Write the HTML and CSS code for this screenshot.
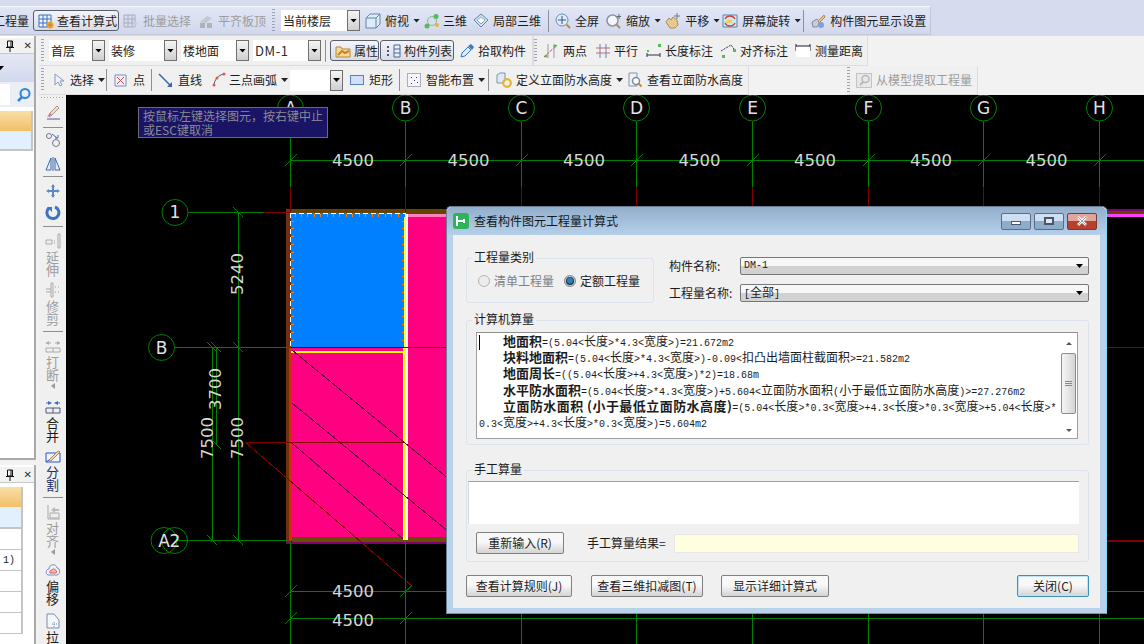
FILE: index.html
```html
<!DOCTYPE html>
<html lang="zh-CN">
<head>
<meta charset="utf-8">
<title>查看构件图元工程量计算式</title>
<link rel="stylesheet" href="styles.css">
</head>
<body>
<div class="app">
  <div class="topband"></div>
  <div class="bar bar1">
    <span class="txt clip">工程量</span>
    <div class="btn on w86 m4"><svg class="ic" viewBox="0 0 16 16"><path d="M1 2h12v12H1z" fill="#eef4ff" stroke="#3b6fc0"/><path d="M1 6h12M1 10h12M5 2v12M9 2v12" stroke="#3b6fc0"/><circle cx="12" cy="12" r="3.5" fill="#f5a623"/><path d="M12 9.5v5M9.5 12h5" stroke="#a85"/></svg><span>查看计算式</span></div>
    <div class="t off m4"><svg class="ic" viewBox="0 0 16 16"><path d="M1 2h11v12H1zM1 6h11M1 10h11M5 2v12M9 2v12" fill="none" stroke="#aab"/><path d="M10 7l5 4-3 1-1 3z" fill="#ccd"/></svg><span>批量选择</span></div>
    <div class="t off m7"><svg class="ic" viewBox="0 0 16 16"><path d="M2 9l7-6 5 2-7 6z" fill="#c4c8d0"/><path d="M2 10h5v5H2zM9 10h5v5H9z" fill="#aeb2ba"/></svg><span>平齐板顶</span></div>
    <i class="grip m6"></i>
    <div class="combo w79 m6"><span class="val">当前楼层</span><b class="drop"></b></div>
    <div class="t m5"><svg class="ic" viewBox="0 0 16 16"><path d="M1 5l4-4h10v10l-4 4H1z" fill="#dcecfb" stroke="#5f86a8"/><path d="M1 5h10v10M11 5l4-4" fill="none" stroke="#5f86a8"/></svg><span>俯视</span><i class="caret"></i></div>
    <div class="t g3 m4"><svg class="ic" viewBox="0 0 16 16"><circle cx="8" cy="8" r="4.5" fill="#d9dfe6" stroke="#8b9"/><circle cx="12" cy="3.5" r="2.5" fill="#5cb85c"/><circle cx="3" cy="13" r="2.5" fill="#5cb85c"/><circle cx="13" cy="12" r="2" fill="#e8b23a"/></svg><span>三维</span></div>
    <div class="t m6"><svg class="ic" viewBox="0 0 16 16"><path d="M8 1l7 6-7 7-7-7z" fill="#cfe2f5" stroke="#5f86a8"/><path d="M4 7l4-3 4 3-4 4z" fill="#fff" stroke="#8ab"/></svg><span>局部三维</span></div>
    <i class="sep m7"></i>
    <div class="t m6"><svg class="ic" viewBox="0 0 16 16"><circle cx="7" cy="7" r="6" fill="#dfe9f8" stroke="#6d8db5"/><path d="M7 3v8M3 7h8" stroke="#35598a"/><path d="M11.500 11.500l3.500 3.500" stroke="#c08a3a" stroke-width="2"/></svg><span>全屏</span></div>
    <div class="t m7"><svg class="ic" viewBox="0 0 16 16"><circle cx="6.500" cy="7.500" r="5.500" fill="#f3f6fb" stroke="#8a94a5" stroke-width="1.500"/><path d="M10.500 11.500l3.500 3.500" stroke="#c08a3a" stroke-width="2"/><path d="M13 1v5M11 3.500h4" stroke="#667"/></svg><span>缩放</span><i class="caret"></i></div>
    <div class="t m4"><svg class="ic" viewBox="0 0 16 16"><path d="M1 9l3-4 2 2 2-3 4 3 1 5-3 3H5z" fill="#e5c98f" stroke="#ad8c55"/><path d="M12 0v6M9 3h6" stroke="#778"/></svg><span>平移</span><i class="caret"></i></div>
    <div class="t m2"><svg class="ic" viewBox="0 0 16 16"><path d="M1 2h14v12H1z" fill="#cdeaf2" stroke="#58a"/><path d="M3 9c2-3 5-3 7-2v3H3z" fill="#e8d063"/><path d="M3 6c2-4 8-4 10 0M13 10c-2 4-8 4-10 0" fill="none" stroke="#d8433a" stroke-width="1.500"/></svg><span>屏幕旋转</span><i class="caret"></i></div>
    <i class="sep m2"></i>
    <div class="t m6"><svg class="ic" viewBox="0 0 16 16"><path d="M2 9l5-3 3 3-3 5H3z" fill="#c9ccd6" stroke="#889"/><path d="M8 8l6-6 1 2-6 6z" fill="#e9c870" stroke="#a86"/><circle cx="11" cy="12" r="3" fill="#7aa3d8"/></svg><span>构件图元显示设置</span></div>
  </div>

  <div class="main">
    <aside class="side">
      <section class="panel panel-a">
        <header class="phead"><svg class="pin" viewBox="0 0 10 12"><path d="M2.500 1h5v6h-5zM6 1v6M1 7.500h8M5 8v4" fill="none" stroke="#111"/></svg><span class="cls">✕</span></header>
        <div class="pbar"><i class="caret dark"></i></div>
        <div class="psearch"><span class="pinput"></span><svg class="sic" viewBox="0 0 14 14"><circle cx="8" cy="5.500" r="4.500" fill="none" stroke="#2f86d6" stroke-width="2"/><path d="M5 9l-4 4" stroke="#2f86d6" stroke-width="2.500"/></svg></div>
        <div class="ptable"><div class="th"></div><div class="sel"></div></div>
      </section>
      <section class="panel panel-b">
        <header class="phead"><svg class="pin" viewBox="0 0 10 12"><path d="M2.500 1h5v6h-5zM6 1v6M1 7.500h8M5 8v4" fill="none" stroke="#111"/></svg><span class="cls">✕</span></header>
        <div class="ptable narrow">
          <div class="th"></div><div class="sel tall"></div>
          <div class="row"></div><div class="row"><span class="rowtxt">1)</span></div><div class="row"></div><div class="row"></div><div class="row"></div>
        </div>
      </section>
    </aside>

    <div class="work">
      <div class="bar bar2">
        <div class="tb tb2a">
          <i class="grip"></i>
          <div class="combo w56 m5"><span class="val">首层</span><b class="drop"></b></div>
          <div class="combo w68 m4"><span class="val">装修</span><b class="drop"></b></div>
          <div class="combo w68 m4"><span class="val">楼地面</span><b class="drop"></b></div>
          <div class="combo w68 m4"><span class="val latin">DM-1</span><b class="drop"></b></div>
          <i class="sep m4"></i>
          <div class="btn on w49 m4"><svg class="ic" viewBox="0 0 16 16"><path d="M1 4h5l1 2h8v8H1z" fill="#f3dc93" stroke="#b08a3a"/><path d="M3 12l4-4 3 2 4-2" fill="none" stroke="#d87a20" stroke-width="2"/></svg><span>属性</span></div>
          <div class="btn on w74 m1"><svg class="ic" viewBox="0 0 16 16"><path d="M2 3h2v2H2zM2 7h2v2H2zM2 11h2v2H2z" fill="#557"/><path d="M9 2h6v12H9zM9 6h6M9 10h6" fill="#e7effa" stroke="#456a9a"/></svg><span>构件列表</span></div>
          <div class="t g3 m5"><svg class="ic" viewBox="0 0 16 16"><path d="M2 14l1-4 6-6 3 3-6 6z" fill="#dcebfb" stroke="#3d78c0"/><path d="M9 3l3-2 3 3-2 3z" fill="#3d78c0"/></svg><span>拾取构件</span></div>
        </div>
        <div class="tb tb2b">
          <i class="grip"></i>
          <div class="t m6"><svg class="ic" viewBox="0 0 16 16"><path d="M1 14L14 2" stroke="#d8443a" stroke-dasharray="3 1"/><path d="M5 1v14M11 1v14" stroke="#99a"/><circle cx="3" cy="13" r="1.500" fill="#5b5"/><circle cx="12" cy="3" r="1.500" fill="#5b5"/></svg><span>两点</span></div>
          <div class="t g3 m8"><svg class="ic" viewBox="0 0 16 16"><path d="M1 5h14M1 10h14" stroke="#c06a70"/><path d="M5 1v14M11 1v14" stroke="#7080b0"/></svg><span>平行</span></div>
          <div class="t g3 m8"><svg class="ic" viewBox="0 0 16 16"><path d="M1 10v4M14 10v4M1 12h13" stroke="#334" fill="none"/><path d="M1 7h2v2H1zM12 1h3v3h-3z" fill="#5b5"/></svg><span>长度标注</span></div>
          <div class="t m7"><svg class="ic" viewBox="0 0 16 16"><path d="M1 8l10-6 3 4" stroke="#334" fill="none" stroke-dasharray="2 1"/><path d="M2 12h3v3H2zM13 6h3v3h-3z" fill="#5b5"/></svg><span>对齐标注</span></div>
          <div class="t m7"><svg class="ic" viewBox="0 0 16 16"><path d="M1 1v7M15 1v7M1 3h14" stroke="#223" fill="none"/><path d="M1 4h14v10H1z" fill="#fff"/></svg><span>测量距离</span></div>
        </div>
      </div>

      <div class="bar bar3">
        <div class="tb tb3a">
          <i class="grip"></i>
          <div class="t m6"><svg class="ic" viewBox="0 0 16 16"><path d="M5 2v11l3-3 2 4 2-1-2-4h4z" fill="#eef2fa" stroke="#8899b8"/></svg><span>选择</span><i class="caret"></i></div>
          <i class="sep m1"></i>
          <div class="t m6"><svg class="ic" viewBox="0 0 16 16"><path d="M2 3h11v11H2z" fill="#eef2fb" stroke="#7a8cb8"/><path d="M4 5l7 7M11 5l-7 7" stroke="#d0454a"/></svg><span>点</span></div>
          <i class="sep m6"></i>
          <div class="t m6"><svg class="ic" viewBox="0 0 16 16"><path d="M1 2l12 12" stroke="#3568a8" stroke-width="1.500"/><path d="M14 15H9l5-5z" fill="#3568a8"/></svg><span>直线</span></div>
          <div class="t g2 m9"><svg class="ic" viewBox="0 0 16 16"><path d="M3 14C3 8 7 3 13 2" fill="none" stroke="#556"/><circle cx="3" cy="13" r="1.500" fill="#e4584c"/><circle cx="6" cy="6" r="1.500" fill="#e4584c"/><circle cx="13" cy="2" r="1.500" fill="#e4584c"/></svg><span>三点画弧</span><i class="caret"></i></div>
          <div class="combo w53 m2"><span class="val"></span><b class="drop"></b></div>
          <div class="t m6"><svg class="ic" viewBox="0 0 16 16"><rect x="1.500" y="3.500" width="13" height="9" fill="#cfe0f8" stroke="#5d80b8"/></svg><span>矩形</span></div>
          <i class="sep m6"></i>
          <div class="t m6"><svg class="ic" viewBox="0 0 16 16"><rect x="1.500" y="1.500" width="13" height="13" fill="#f3f5fa" stroke="#667" stroke-dasharray="1 1"/><path d="M5 5h1v1H5zM10 5h1v1h-1zM8 8h1v1H8zM5 11h1v1H5zM11 10h1v1h-1z" fill="#346"/></svg><span>智能布置</span><i class="caret"></i></div>
          <i class="sep m3"></i>
          <div class="t m7"><svg class="ic" viewBox="0 0 16 16"><path d="M1 3l3-2h5v8l-3 2H1z" fill="#dfeafa" stroke="#7f93b3"/><circle cx="11" cy="11" r="3.800" fill="none" stroke="#e4b72a" stroke-width="2.200"/></svg><span>定义立面防水高度</span><i class="caret"></i></div>
          <div class="t m4"><svg class="ic" viewBox="0 0 16 16"><path d="M2 1h8v13H2z" fill="#eef2f8" stroke="#8892a5"/><circle cx="9" cy="9" r="3.500" fill="#fff" stroke="#7a8ca8" stroke-width="1.500"/><path d="M11.500 11.500l3 3" stroke="#c08a3a" stroke-width="2"/></svg><span>查看立面防水高度</span></div>
        </div>
        <div class="tb tb3b">
          <i class="grip"></i>
          <div class="t off m6"><svg class="ic" viewBox="0 0 16 16"><rect x="0.500" y="1.500" width="15" height="14" fill="#e8e8e8" stroke="#c4c4c4"/><circle cx="9.500" cy="7" r="3.500" fill="none" stroke="#b8b8b8" stroke-width="1.500"/><path d="M7 10l-3 3" stroke="#b8b8b8" stroke-width="2"/></svg><span>从模型提取工程量</span></div>
        </div>
      </div>

      <div class="stage">
        <nav class="strip">
          <i class="hgrip"></i>
          <svg class="ic s6" viewBox="0 0 16 16"><path d="M2 15h13" stroke="#55a" /><path d="M4 13l1-4 7-7 2 2-7 7z" fill="#e4e0d4" stroke="#a98"/><path d="M2 13l3-4 2 2z" fill="#e46aa0"/></svg>
          <i class="ssep s7"></i>
          <svg class="ic s4" viewBox="0 0 16 16"><circle cx="4" cy="4" r="2.500" fill="none" stroke="#778"/><circle cx="11" cy="11" r="3.500" fill="none" stroke="#778"/><path d="M7 2l5 4M13 3v3h-3" fill="none" stroke="#46c"/></svg>
          <svg class="ic s8" viewBox="0 0 16 16"><path d="M1 14L6 2v12zM15 14L10 2v12z" fill="#e4ecfb" stroke="#3d68ac"/><path d="M8 1v14" stroke="#3d68ac"/></svg>
          <i class="ssep s4"></i>
          <svg class="ic s6" viewBox="0 0 16 16"><path d="M8 1l2 3H9v3h3V6l3 2-3 2V9H9v3h1l-2 3-2-3h1V9H4v1L1 8l3-2v1h3V4H6z" fill="#5d88c4"/></svg>
          <svg class="ic s6" viewBox="0 0 16 16"><path d="M4 3a6 6 0 1 0 6-1" fill="none" stroke="#3f72c0" stroke-width="3"/><path d="M2 2h5v5z" fill="#3f72c0"/></svg>
          <i class="ssep s5"></i>
          <svg class="ic s6" viewBox="0 0 16 16"><path d="M13 1h2v14h-2zM1 7h6v4H1z" fill="#eee" stroke="#aaa"/><path d="M9 8h1M9 10h1" stroke="#999"/></svg>
          <span class="vt off s1">延伸</span>
          <svg class="ic s6" viewBox="0 0 16 16"><path d="M6 1h2v14H6zM1 7h5M1 10h5" fill="#eee" stroke="#aaa"/><path d="M10 5h1M13 5h1M10 10h1M13 10h1" stroke="#999"/></svg>
          <span class="vt off s1">修剪</span>
          <i class="ssep s6"></i>
          <svg class="ic s6" viewBox="0 0 16 16"><path d="M1 5h5M10 5h5M1 10h14v4H1zM8 10v4" fill="none" stroke="#aaa"/><path d="M1 5l3-2v4zM15 5l-3-2v4z" fill="#aaa"/></svg>
          <span class="vt off s1">打断</span>
          <i class="lcaret off-c"></i>
          <svg class="ic s10" viewBox="0 0 16 16"><path d="M1 4h5M10 4h5" stroke="#3f72c0"/><path d="M7 4L3 2v4zM9 4l4-2v4z" fill="#3f72c0"/><path d="M1 9h14v5H1zM8 9v5" fill="none" stroke="#557"/></svg>
          <span class="vt s1">合并</span>
          <svg class="ic s6" viewBox="0 0 16 16"><path d="M1 5h14v9H1z" fill="#eef3ff" stroke="#2a50c8"/><path d="M4 12l9-9 2 1-9 9z" fill="#e8d9c0" stroke="#a85"/><path d="M1 14l3-2" stroke="#2a50c8"/></svg>
          <span class="vt blue s1">分割</span>
          <i class="ssep s6"></i>
          <svg class="ic s6" viewBox="0 0 16 16"><path d="M3 1v14M3 15h12M5 9h9v5H5z" fill="#eee" stroke="#aaa"/><path d="M6 6l4-3v2h4v2h-4v2z" fill="#bbb"/></svg>
          <span class="vt off s1">对齐</span>
          <i class="lcaret off-c"></i>
          <svg class="ic s7" viewBox="0 0 16 16"><path d="M3 13c-3-1-2-6 1-6 0-5 7-6 8-1 3 0 4 6 0 7z" fill="#eef2fa" stroke="#7a8cb8"/><path d="M5 11c-1-2 1-3 2-3 1-2 3-1 3 0 2 0 2 3 1 3z" fill="#f3b5ae" stroke="#d8605a"/></svg>
          <span class="vt s1">偏移</span>
          <svg class="ic s8" viewBox="0 0 16 16"><path d="M2 1h7l5 6v8H2z" fill="#f3f6fb" stroke="#7a8ca8"/><path d="M9 9v5M12 11h-5" stroke="#7a8ca8" stroke-dasharray="1 1"/></svg>
          <span class="vt s1">拉伸</span>
        </nav>

        <div class="canvas">
          <svg class="cad" viewBox="66 94 1078 550">
            <!-- filled slabs -->
            <rect x="286" y="208" width="858" height="5" fill="#664400"/>
            <rect x="1107" y="208" width="37" height="2" fill="#800080"/>
            <rect x="1107" y="213" width="37" height="3" fill="#ff40ff"/>
            <rect x="286" y="208" width="5" height="335" fill="#703010"/>
            <rect x="291" y="212" width="114" height="134" fill="#0080ff"/>
            <rect x="407" y="213" width="50" height="326" fill="#ff0080"/>
            <rect x="407" y="213" width="50" height="3" fill="#ff80c0"/>
            <rect x="291" y="347" width="114" height="193" fill="#ff0080"/>
            <rect x="292" y="536" width="180" height="5" fill="#665000"/>
            <rect x="286" y="541" width="180" height="2" fill="#800070"/>
            <rect x="1107" y="539" width="37" height="2" fill="#800000"/>
            <rect x="289" y="347" width="3" height="193" fill="#cc3300"/>
            <path class="l" d="M291 348.500H405" stroke="#ff2020" stroke-width="1"/>
            <path class="l" d="M291 350.500H403" stroke="#ffff00" stroke-width="2"/>
            <path class="l" d="M290.500 212V346" stroke="#fff" stroke-dasharray="5 3" stroke-width="1"/>
            <path class="l" d="M291 212.500H405" stroke="#fff" stroke-dasharray="5 3" stroke-width="1"/>
            <path class="l" d="M405.500 212V346" stroke="#ffff40" stroke-dasharray="5 2" stroke-width="1"/>
            <path class="l" d="M295 213v3M301 213v3M307 213v3M314 213v3M320 213v3M327 213v3M333 213v3M339 213v3M346 213v3M352 213v3M359 213v3M365 213v3M372 213v3M378 213v3M385 213v3M391 213v3M398 213v3" stroke="#ff8000"/>
            <path class="l" d="M291 220h3M291 227h3M291 235h3M291 243h3M291 251h3M291 259h3M291 267h3M291 275h3M291 283h3M291 291h3M291 299h3M291 307h3M291 315h3M291 323h3M291 331h3M291 339h3M402 220h3M402 227h3M402 235h3M402 243h3M402 251h3M402 259h3M402 267h3M402 275h3M402 283h3M402 291h3M402 299h3M402 307h3M402 315h3M402 323h3M402 331h3M402 339h3" stroke="#ff8000"/>
            <rect x="403" y="347" width="1" height="192" fill="#fff"/>
            <rect x="404" y="347" width="2" height="192" fill="#ffff00"/>
            <rect x="406" y="213" width="2" height="326" fill="#fff"/>
            <rect x="404" y="216" width="2" height="130" fill="#ffff30"/>
            <!-- hatch -->
            <path class="l" d="M292 349L472 497M292 402L472 550M292 442L403 538" stroke="#600040"/>
            <!-- red construction lines -->
            <path class="l" d="M290.500 186V211M405.500 186V211M521.500 186V205M636.500 186V205M752.500 186V205M868.500 186V205M983.500 186V205M1099.500 186V205" stroke="#800000"/>
            <path class="l" d="M264 211.500H290M292 346.500H1144M245 441.500H405M245 441L412 585l-4 4" stroke="#800000" fill="none"/>
            <!-- axes -->
            <path class="l" d="M290.500 120V186M405.500 120V186M521.500 120V186M636.500 120V186M752.500 120V186M868.500 120V186M983.500 120V186M1099.500 120V186" stroke="#008000"/>
            <path class="l" d="M290.500 541V644M405.500 541V644M521.500 541V644M636.500 541V644M752.500 541V644M868.500 541V644M983.500 541V644M1099.500 541V644" stroke="#008000"/>
            <path class="l" d="M290 159.500H1144M290 590.500H1144M290 617.500H1144M188 211.500H264M174 346.500H288M176 539.500H288M238.500 211V540M212.500 346V540M216.500 346V443" stroke="#008000" fill="none"/>
            <path class="l" d="M284.500 165.500l12-12M399.500 165.500l12-12M515.500 165.500l12-12M630.500 165.500l12-12M746.500 165.500l12-12M862.500 165.500l12-12M977.500 165.500l12-12M1093.500 165.500l12-12M284.500 596.500l12-12M399.500 596.500l12-12M284.500 623.500l12-12M399.500 623.500l12-12M233.500 206.500l10 10M233.500 341.500l10 10M233.500 534.500l10 10M207.500 341.500l10 10M207.500 534.500l10 10M211.500 341.500l10 10M211.500 438.500l10 10" stroke="#008000" fill="none"/>
            <g class="bub">
              <circle cx="290.500" cy="107" r="13"/><circle cx="405.500" cy="107" r="13"/><circle cx="521.500" cy="107" r="13"/><circle cx="636.500" cy="107" r="13"/><circle cx="752.500" cy="107" r="13"/><circle cx="868.500" cy="107" r="13"/><circle cx="983.500" cy="107" r="13"/><circle cx="1099.500" cy="107" r="13"/>
              <circle cx="175" cy="211.500" r="13"/><circle cx="161.500" cy="346.500" r="13"/><circle cx="164" cy="539.500" r="13"/><circle cx="174.500" cy="539.500" r="13"/>
            </g>
            <g class="lab">
              <text x="290.500" y="113">A</text><text x="405.500" y="113">B</text><text x="521.500" y="113">C</text><text x="636.500" y="113">D</text><text x="752.500" y="113">E</text><text x="868.500" y="113">F</text><text x="983.500" y="113">G</text><text x="1099.500" y="113">H</text>
              <text x="175" y="217">1</text><text x="161.500" y="352.500">B</text><text x="164" y="545.500">A</text><text x="175" y="545.500">2</text>
            </g>
            <g class="dim">
              <text x="353" y="165">4500</text><text x="468.500" y="165">4500</text><text x="584" y="165">4500</text><text x="699.500" y="165">4500</text><text x="815" y="165">4500</text><text x="931" y="165">4500</text><text x="1046.500" y="165">4500</text>
              <text x="353" y="596">4500</text><text x="353" y="625">4500</text>
              <text transform="translate(243 273) rotate(-90)">5240</text>
              <text transform="translate(221 388) rotate(-90)">3700</text>
              <text transform="translate(213 437) rotate(-90)">7500</text>
              <text transform="translate(243 437) rotate(-90)">7500</text>
            </g>
          </svg>

          <div class="tip">按鼠标左键选择图元，按右键中止<br>或ESC键取消</div>

          <section class="dialog">
            <header class="title">
              <svg class="appic" viewBox="0 0 16 16"><rect width="16" height="16" rx="3" fill="#2fb35a"/><path d="M4 3v10M4 8h7M11 6v4" stroke="#fff" stroke-width="2" fill="none"/></svg>
              <span class="ttext">查看构件图元工程量计算式</span>
              <div class="wbtns">
                <span class="wb"><i class="gl-min"></i></span>
                <span class="wb"><i class="gl-max"></i></span>
                <span class="wb close"><svg class="gl-x" viewBox="0 0 12 10"><path d="M2 1l8 8M10 1L2 9" stroke="#fff" stroke-width="2.600"/><path d="M2 1l8 8M10 1L2 9" stroke="#5a6470" stroke-width="0.600"/></svg></span>
              </div>
            </header>
            <div class="body">
              <div class="toprow">
                <div class="group g-type">
                  <span class="legend">工程量类别</span>
                  <label class="radio dis"><i class="rdot"></i>清单工程量</label>
                  <label class="radio"><i class="rdot chk"></i>定额工程量</label>
                </div>
                <div class="fields">
                  <div class="field"><span class="flabel">构件名称:</span><div class="select"><span class="mono">DM-1</span><i class="caret dark"></i></div></div>
                  <div class="field"><span class="flabel">工程量名称:</span><div class="select"><span class="mono">[<span class="c">全部</span>]</span><i class="caret dark"></i></div></div>
                </div>
              </div>

              <div class="group g-calc">
                <span class="legend">计算机算量</span>
                <div class="calcbox">
                  <i class="cursor"></i>
                  <div class="ln ind"><b>地面积</b>=(5.04&lt;<span class="c">长度</span>&gt;*4.3&lt;<span class="c">宽度</span>&gt;)=21.672m2</div>
                  <div class="ln ind"><b>块料地面积</b>=(5.04&lt;<span class="c">长度</span>&gt;*4.3&lt;<span class="c">宽度</span>&gt;)-0.09&lt;<span class="c">扣凸出墙面柱截面积</span>&gt;=21.582m2</div>
                  <div class="ln ind"><b>地面周长</b>=((5.04&lt;<span class="c">长度</span>&gt;+4.3&lt;<span class="c">宽度</span>&gt;)*2)=18.68m</div>
                  <div class="ln ind"><b>水平防水面积</b>=(5.04&lt;<span class="c">长度</span>&gt;*4.3&lt;<span class="c">宽度</span>&gt;)+5.604&lt;<span class="c">立面防水面积</span>(<span class="c">小于最低立面防水高度</span>)&gt;=27.276m2</div>
                  <div class="ln ind"><b class="wide">立面防水面积 (小于最低立面防水高度)</b>=(5.04&lt;<span class="c">长度</span>&gt;*0.3&lt;<span class="c">宽度</span>&gt;+4.3&lt;<span class="c">长度</span>&gt;*0.3&lt;<span class="c">宽度</span>&gt;+5.04&lt;<span class="c">长度</span>&gt;*</div>
                  <div class="ln">0.3&lt;<span class="c">宽度</span>&gt;+4.3&lt;<span class="c">长度</span>&gt;*0.3&lt;<span class="c">宽度</span>&gt;)=5.604m2</div>
                  <div class="vscroll">
                    <i class="up"></i>
                    <div class="thumb"><i class="ridges"></i></div>
                    <i class="down"></i>
                  </div>
                </div>
              </div>

              <div class="group g-hand">
                <span class="legend">手工算量</span>
                <div class="handbox"></div>
                <div class="handrow">
                  <span class="pbtn w88">重新输入(R)</span>
                  <span class="hlabel">手工算量结果=</span>
                  <span class="result"></span>
                </div>
              </div>

              <div class="actions">
                <span class="pbtn w106">查看计算规则(J)</span>
                <span class="pbtn w112">查看三维扣减图(T)</span>
                <span class="pbtn w108">显示详细计算式</span>
                <span class="pbtn w72 default">关闭(C)</span>
              </div>
            </div>
          </section>
        </div>
      </div>
    </div>
  </div>
</div>
</body>
</html>
```

FILE: styles.css
```css
* { box-sizing: border-box; }
html, body { margin: 0; height: 100%; overflow: hidden; }
body { background: #d6dcee; color: #1c1c1c; font: 12px/16px "Noto Sans CJK SC", "Noto Sans", sans-serif; }
i { display: block; font-style: normal; }

.app { width: 1144px; height: 644px; display: flex; flex-direction: column; overflow: hidden; }
.topband { height: 6px; flex: none; }

.m1 { margin-left: 1px; } .m2 { margin-left: 2px; } .m3 { margin-left: 3px; } .m4 { margin-left: 4px; }
.m5 { margin-left: 5px; } .m6 { margin-left: 6px; } .m7 { margin-left: 7px; } .m8 { margin-left: 8px; } .m9 { margin-left: 9px; }

.bar { display: flex; align-items: center; flex: none; white-space: nowrap; }
.bar1 { width: 931px; height: 29px; background: linear-gradient(#e1e6f6, #d2d8ec); border-top: 1px solid #f6f7fc; border-bottom: 1px solid #c2c7d6; border-right: 1px solid #c2c7d6; }
.clip { margin-left: -7px; }
.ic { width: 16px; height: 16px; flex: none; display: block; }

.t { display: flex; align-items: center; gap: 4px; flex: none; }
.g2 { gap: 2px; } .g3 { gap: 3px; }
.g2 .caret { margin-left: 2px; }
.off { color: #9d9d9d; }
.caret { width: 7px; height: 4px; flex: none; background: #222; clip-path: polygon(0 0, 100% 0, 50% 100%); }
.caret.dark { background: #000; }

.grip { width: 3px; height: 24px; flex: none; background: repeating-linear-gradient(#9ca3b5 0 1px, transparent 1px 3px); }
.sep { width: 1px; height: 22px; flex: none; background: #8b8f9a; }

.btn { display: flex; align-items: center; gap: 3px; height: 21px; padding-left: 4px; flex: none; border: 1px solid #5a5f6e; border-radius: 3px; background: linear-gradient(#f3f4f8, #d9dce6); }
.w86 { width: 86px; } .w49 { width: 49px; } .w74 { width: 74px; }

.combo { display: flex; height: 21px; flex: none; background: #fff; }
.w79 { width: 79px; } .w56 { width: 56px; } .w68 { width: 68px; } .w53 { width: 53px; }
.val { flex: 1; padding-left: 2px; line-height: 21px; }
.latin { font-size: 13px; letter-spacing: .6px; padding-left: 2px; color: #2b2b2b; }
.drop { width: 13px; display: flex; align-items: center; justify-content: center; border: 1px solid #6f6f6f; background: linear-gradient(#f5f5f5, #cfcfcf); }
.drop::after { content: ""; width: 7px; height: 4px; background: #000; clip-path: polygon(0 0, 100% 0, 50% 100%); }

.main { flex: 1; display: flex; min-height: 0; margin-top: 1px; background: #f2f2f2; }

.side { width: 39px; flex: none; display: flex; flex-direction: column; background: #f2f2f2; }
.panel { width: 36px; background: #fff; border-right: 2px solid #a9a9a9; display: flex; flex-direction: column; overflow: hidden; }
.panel-a { height: 424px; border-bottom: 2px solid #a9a9a9; flex: none; }
.panel-b { flex: 1; margin-top: 5px; }
.phead { height: 16px; flex: none; display: flex; align-items: center; justify-content: flex-end; gap: 9px; padding: 0 2px 0 0; margin-top: 2px; border-bottom: 1px solid #c8c8c8; background: #f2f2f2; }
.pin { width: 10px; height: 12px; display: block; flex: none; }
.cls { font: 10px/14px "DejaVu Sans", sans-serif; color: #333; }
.pbar { height: 28px; flex: none; display: flex; align-items: center; background: linear-gradient(#e4e8f6, #d2d9ee); }
.pbar .caret { margin-left: -3px; }
.psearch { height: 25px; flex: none; display: flex; align-items: center; gap: 7px; background: #eceef6; }
.pinput { width: 10px; height: 21px; background: #fff; }
.sic { width: 14px; height: 14px; display: block; }
.ptable { margin-top: 4px; width: 33px; border-right: 2px solid #c4c4c4; }
.ptable.narrow { width: 23px; margin-top: 4px; }
.th { height: 20px; background: linear-gradient(#f8dfa8, #f2c067); }
.sel { height: 20px; background: #e2f0fd; border-bottom: 2px solid #c4c4c4; }
.sel.tall { height: 22px; }
.row { height: 21px; border-bottom: 1px solid #c4c4c4; position: relative; }
.rowtxt { display: block; font: 10px/21px "Liberation Mono", monospace; padding-left: 3px; }

.work { flex: 1; min-width: 0; display: flex; flex-direction: column; }
.bar2 { height: 30px; }
.bar3 { height: 29px; }
.tb { display: flex; align-items: center; height: 100%; flex: none; background: #f0f0f0; border: solid #dcdcdc; border-width: 0 1px 1px 0; }
.tb .grip:first-child { margin-left: 2px; }
.tb2a { width: 494px; }
.tb2b { width: 335px; margin-left: 0; border-left: 1px solid #dcdcdc; }
.tb2b .grip:first-child { margin-left: 0; }
.tb3a { width: 710px; }
.tb3b { width: 131px; margin-left: 98px; }
.tb3b .grip:first-child { margin-left: 0; }
.tb3b .grip { height: 26px; }

.stage { flex: 1; min-height: 0; display: flex; }
.strip { width: 27px; flex: none; display: flex; flex-direction: column; align-items: center; background: #f0f0f0; overflow: hidden; }
.hgrip { width: 24px; height: 1px; margin-top: 2px; flex: none; background: repeating-linear-gradient(90deg, #9ca3b5 0 1px, transparent 1px 3px); }
.ssep { width: 20px; height: 1px; flex: none; background: #8f8f8f; }
.strip .ic { margin-left: 1px; }
.s1 { margin-top: 1px; } .s2 { margin-top: 2px; } .s3 { margin-top: 3px; } .s4 { margin-top: 4px; } .s5 { margin-top: 5px; }
.s6 { margin-top: 6px; } .s7 { margin-top: 7px; } .s8 { margin-top: 8px; } .s10 { margin-top: 10px; }
.vt { width: 14px; flex: none; font-size: 13px; line-height: 13px; text-align: center; word-break: break-all; color: #1c1c1c; }
.vt.off { color: #9d9d9d; }
.vt.blue { color: #1d2f6e; }
.lcaret { width: 0; height: 0; margin-top: 2px; flex: none; border: 3px solid transparent; border-right: 4px solid #999; border-left: 0; }

.canvas { flex: 1; position: relative; background: #000; overflow: hidden; }
.cad { display: block; width: 1078px; height: 550px; shape-rendering: crispEdges; }
.l { fill: none; }
.bub circle { fill: none; stroke: #008000; stroke-width: 1; shape-rendering: geometricPrecision; }
.lab text { font: 17px "DejaVu Sans", sans-serif; fill: #e2e2e2; text-anchor: middle; }
.dim text { font: 16.500px "DejaVu Sans", sans-serif; fill: #d6d6d6; text-anchor: middle; }

.tip { position: absolute; left: 72px; top: 12px; width: 190px; height: 31px; padding: 1px 4px; background: #191464; border: 1px solid #6a6a78; color: #8a8a96; font-size: 12px; line-height: 14px; }

.dialog { position: absolute; left: 380px; top: 111px; width: 661px; height: 408px; display: flex; flex-direction: column; border: 1px solid #6b7d92; border-right-color: #7fdcf5; border-bottom-color: #4aa8a8; border-radius: 5px 5px 0 0; background: #b8d2ec; box-shadow: inset 0 1px 0 #eef5fb; }
.title { height: 28px; flex: none; display: flex; align-items: center; padding: 0 9px 0 6px; background: linear-gradient(#92aecb, #b6d0ea); border-radius: 5px 5px 0 0; }
.appic { width: 16px; height: 16px; flex: none; display: block; }
.ttext { margin-left: 5px; font-size: 12px; line-height: 16px; width: 145px; color: #101820; white-space: nowrap; }
.wbtns { margin-left: auto; display: flex; gap: 3px; }
.wb { width: 30px; height: 17px; display: flex; align-items: center; justify-content: center; border: 1px solid #5c6c84; border-radius: 2px; background: linear-gradient(#cddff0 0 45%, #8daccb 45% 100%); }
.wb.close { background: linear-gradient(#e0a69b 0 45%, #b83f2d 45% 100%); border-color: #7a3a34; }
.gl-min { width: 10px; height: 4px; margin-top: 3px; background: #fff; border: 1px solid #4a5668; }
.gl-max { width: 10px; height: 8px; background: #dfe8f2; border: 2px solid #4a5668; }
.gl-x { width: 12px; height: 10px; display: block; }

.body { flex: 1; min-height: 0; margin: 0 6px 5px; padding: 23px 11px 0 13px; background: #f0f0f0; display: flex; flex-direction: column; }
.toprow { display: flex; flex: none; height: 45px; }
.group { position: relative; flex: none; border: 1px solid #dde3ea; border-radius: 3px; }
.legend { position: absolute; left: 5px; top: -10px; padding: 0 2px; background: #f0f0f0; line-height: 16px; white-space: nowrap; }
.g-type { width: 188px; height: 45px; display: flex; align-items: center; padding-left: 11px; padding-top: 1px; }
.radio { display: flex; align-items: center; gap: 4px; width: 86px; line-height: 16px; }
.radio.dis { color: #808080; }
.rdot { width: 12px; height: 12px; border-radius: 50%; background: #ececec; border: 1px solid #b4b4b4; }
.rdot.chk { border: 2px solid #c8c8c8; background: radial-gradient(circle at 50% 45%, #2f7fb8 0 2.500px, #123a5c 3.500px); outline: 1px solid #8f8f8f; outline-offset: -1px; }
.fields { margin-left: 15px; width: 420px; margin-top: -1px; }
.field { display: flex; align-items: center; height: 18px; margin-bottom: 9px; }
.flabel { width: 71px; flex: none; }
.select { flex: 1; height: 18px; display: flex; align-items: center; justify-content: space-between; padding: 0 5px 0 3px; border: 1px solid #777; border-radius: 2px; background: linear-gradient(#f7f7f7 0 48%, #d2d2d2 48% 100%); }
.mono { font: 10px/16px "Liberation Mono", monospace; }
.c { font: 12px/16px "Noto Sans CJK SC", sans-serif; }

.g-calc { margin-top: 17px; height: 125px; padding: 11px 10px 0 9px; }
.calcbox { position: relative; height: 107px; padding: 0 0 0 2px; background: #fff; border: 1px solid #a0a0a0; border-top-color: #8f8f8f; }
.ln { height: 16.200px; font: 10px/16.200px "Liberation Mono", monospace; white-space: nowrap; }
.ln b { font: 700 13px/16.200px "Noto Sans CJK SC", sans-serif; }
.ln b.wide { letter-spacing: .45px; }
.ind { padding-left: 24px; }
.cursor { position: absolute; left: 2px; top: 2px; width: 1px; height: 15px; background: #000; }
.vscroll { position: absolute; right: 1px; top: 0; bottom: 0; width: 15px; display: flex; flex-direction: column; align-items: center; background: #fff; }
.up { width: 0; height: 0; margin-top: 9px; border: 3px solid transparent; border-bottom: 3px solid #555; border-top: 0; }
.down { width: 0; height: 0; margin-top: 15px; border: 3px solid transparent; border-top: 3px solid #555; border-bottom: 0; }
.thumb { width: 15px; height: 61px; margin-top: 8px; display: flex; align-items: center; justify-content: center; border: 1px solid #8c8c8c; border-radius: 2px; background: linear-gradient(90deg, #f5f5f5, #d4d4d4); }
.ridges { width: 7px; height: 6px; background: repeating-linear-gradient(#888 0 1px, transparent 1px 2px); }

.g-hand { margin-top: 25px; height: 92px; padding: 10px 9px 0 1px; }
.handbox { height: 43px; background: #fff; border-top: 1px solid #a0a0a0; border-left: 1px solid #d8d8d8; }
.handrow { display: flex; align-items: center; margin-top: 8px; padding-left: 8px; }
.pbtn { display: flex; align-items: center; justify-content: center; height: 22px; flex: none; border: 1px solid #808080; border-radius: 2px; background: linear-gradient(#f8f8f8 0 45%, #d4d4d4 100%); white-space: nowrap; }
.w88 { width: 88px; } .w106 { width: 106px; } .w112 { width: 112px; margin-left: 19px; } .w108 { width: 108px; margin-left: 18px; } .w72 { width: 72px; margin-left: auto; }
.default { border-color: #3c8fc0; box-shadow: inset 0 0 0 1px #bfe3f5; }
.hlabel { margin-left: 23px; width: 87px; flex: none; }
.result { flex: 1; height: 19px; background: #ffffe0; border: 1px solid #e6e6e6; }
.actions { display: flex; margin-top: 13px; flex: none; }
```
